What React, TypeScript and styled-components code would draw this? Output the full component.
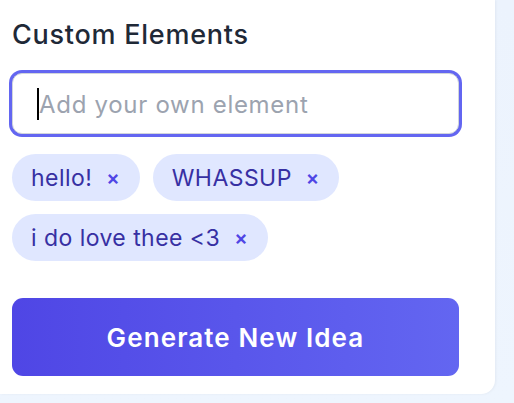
import styled, { createGlobalStyle } from "styled-components";

const GlobalStyle = createGlobalStyle`
  html, body {
    margin: 0;
    padding: 0;
  }
  body {
    width: 514px;
    height: 403px;
    overflow: hidden;
    font-family: Inter, "Liberation Sans", sans-serif;
    background: linear-gradient(180deg, #ecf3fd 0%, #eef5fe 100%);
  }
`;

const Page = styled.div`
  display: flex;
  align-items: flex-start;
  height: 403px;
`;

const Card = styled.section`
  box-sizing: border-box;
  width: 495px;
  padding: 18px 36px 18px 12px;
  background: #ffffff;
  border-bottom-right-radius: 14px;
  box-shadow: 1px 0 3px rgba(15, 23, 42, 0.05);
`;

const Heading = styled.h2`
  margin: 0 0 21px;
  font-size: 27px;
  font-weight: 500;
  line-height: 34px;
  color: #1f2937;
  letter-spacing: 0.75px;
`;

const Field = styled.div`
  position: relative;
  margin-top: 3px;
`;

const Input = styled.input`
  box-sizing: border-box;
  display: block;
  width: 447px;
  height: 61px;
  padding: 2px 0 0 26px;
  border: 1px solid #d1d5db;
  border-radius: 10px;
  box-shadow: 0 0 0 3px #6366f1;
  outline: none;
  font-family: inherit;
  font-size: 24px;
  letter-spacing: 0.7px;
  color: #111827;
  caret-color: transparent;

  &::placeholder {
    color: #9ca3af;
  }
`;

const Caret = styled.span`
  position: absolute;
  left: 25px;
  top: 15px;
  width: 2px;
  height: 32px;
  background: #000;
  pointer-events: none;
`;

const TagList = styled.div`
  display: flex;
  flex-wrap: wrap;
  gap: 13px;
  margin-top: 20px;
`;

const Tag = styled.span`
  display: inline-flex;
  align-items: center;
  gap: 14px;
  height: 47px;
  padding: 0 20px 0 19px;
  box-sizing: border-box;
  border-radius: 999px;
  background: #e0e7ff;
  color: #3730a3;
  font-size: 23px;
  letter-spacing: 0.45px;
`;

const Remove = styled.button`
  border: none;
  background: none;
  padding: 0;
  font-family: inherit;
  font-size: 20px;
  font-weight: 600;
  line-height: 1;
  color: #4f46e5;
  cursor: pointer;
`;

const Generate = styled.button`
  display: block;
  width: 447px;
  height: 78px;
  margin-top: 37px;
  border: none;
  border-radius: 11px;
  background: linear-gradient(90deg, #4f46e5 0%, #6366f1 100%);
  color: #ffffff;
  font-family: inherit;
  font-size: 26px;
  font-weight: 600;
  letter-spacing: 1.1px;
  cursor: pointer;
`;

const tags = ["hello!", "WHASSUP", "i do love thee <3"];

export default function App() {
  return (
    <Page>
      <GlobalStyle />
      <Card>
        <Heading>Custom Elements</Heading>
        <Field>
          <Input placeholder="Add your own element" />
          <Caret />
        </Field>
        <TagList>
          {tags.map((t) => (
            <Tag key={t}>
              {t}
              <Remove aria-label={`Remove ${t}`}>×</Remove>
            </Tag>
          ))}
        </TagList>
        <Generate>Generate New Idea</Generate>
      </Card>
    </Page>
  );
}
